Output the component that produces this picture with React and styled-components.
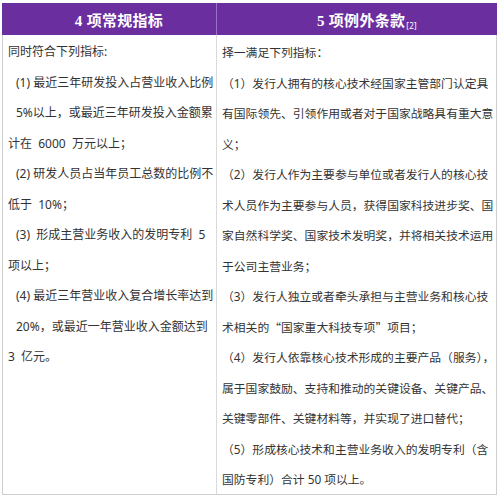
import React from "react";
import styled, { createGlobalStyle } from "styled-components";

const Global = createGlobalStyle`
  html, body { margin: 0; padding: 0; background: #ffffff; }
  body { width: 500px; height: 499px; overflow: hidden; }
`;

const Table = styled.div`
  display: grid;
  grid-template-columns: 214px 281px;
  margin: 3px 0 0 2px;
  width: 495px;
`;

const HeaderCell = styled.div`
  height: 32px;
  background: #6a2e9f;
  color: #ffffff;
  display: flex;
  align-items: center;
  justify-content: center;
  padding-left: 20px;
  box-sizing: border-box;
  font-family: "Liberation Serif", "Noto Sans CJK SC", serif;
  font-weight: 700;
  font-size: 15px;
  letter-spacing: 0.3px;
  border-left: ${(p) => (p.$divider ? "1px solid #9a73c4" : "none")};
`;

const HeadText = styled.span`
  white-space: nowrap;
`;

const Ref = styled.span`
  font-family: "Noto Sans", sans-serif;
  font-weight: 400;
  font-size: 8px;
  margin-left: 1px;
  position: relative;
  top: 3px;
`;

const BodyCell = styled.div`
  border-left: 1px solid ${(p) => (p.$first ? "#cfcfcf" : "#dadada")};
  border-right: ${(p) => (p.$last ? "1px solid #cfcfcf" : "none")};
  border-bottom: 1px solid #cfcfcf;
  padding: 2px 0 0 ${(p) => p.$pad}px;
  box-sizing: border-box;
  height: 460px;
  background: #ffffff;
  overflow: hidden;
  font-size: ${(p) => p.$size}px;
`;

const Line = styled.div`
  font-family: "Noto Sans", "Noto Sans CJK SC", sans-serif;
  line-height: 30.5px;
  height: 30.5px;
  color: #333333;
  white-space: pre;
  padding-left: ${(p) => (p.$indent ? 8 : 0)}px;
`;

const Quote = styled.span`
  font-family: "Noto Sans CJK SC", sans-serif;
`;

const left = [
  ["同时符合下列指标:", false],
  ["(1) 最近三年研发投入占营业收入比例", true],
  ["5%以上，或最近三年研发投入金额累", true],
  ["计在  6000  万元以上；", false],
  ["(2) 研发人员占当年员工总数的比例不", true],
  ["低于  10%；", false],
  ["(3)  形成主营业务收入的发明专利  5", true],
  ["项以上；", false],
  ["(4) 最近三年营业收入复合增长率达到", true],
  ["20%，或最近一年营业收入金额达到", true],
  ["3  亿元。", false],
];

const right = [
  "择一满足下列指标：",
  "（1）发行人拥有的核心技术经国家主管部门认定具",
  "有国际领先、引领作用或者对于国家战略具有重大意",
  "义；",
  "（2）发行人作为主要参与单位或者发行人的核心技",
  "术人员作为主要参与人员，获得国家科技进步奖、国",
  "家自然科学奖、国家技术发明奖，并将相关技术运用",
  "于公司主营业务；",
  "（3）发行人独立或者牵头承担与主营业务和核心技",
  <>
    术相关的<Quote>“</Quote>国家重大科技专项<Quote>”</Quote>项目；
  </>,
  "（4）发行人依靠核心技术形成的主要产品（服务），",
  "属于国家鼓励、支持和推动的关键设备、关键产品、",
  "关键零部件、关键材料等，并实现了进口替代；",
  "（5）形成核心技术和主营业务收入的发明专利（含",
  "国防专利）合计 50 项以上。",
];

export default function App() {
  return (
    <>
      <Global />
      <Table>
        <HeaderCell>
          <HeadText>4 项常规指标</HeadText>
        </HeaderCell>
        <HeaderCell $divider>
          <HeadText>
            5 项例外条款<Ref>[2]</Ref>
          </HeadText>
        </HeaderCell>
        <BodyCell $first $pad={5} $size={12}>
          {left.map(([t, ind], i) => (
            <Line key={i} $indent={ind}>
              {t}
            </Line>
          ))}
        </BodyCell>
        <BodyCell $last $pad={5} $size={11.8}>
          {right.map((t, i) => (
            <Line key={i}>{t}</Line>
          ))}
        </BodyCell>
      </Table>
    </>
  );
}
